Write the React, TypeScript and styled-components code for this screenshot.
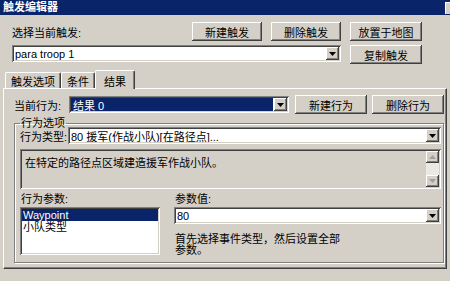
import React from 'react'
import styled, { createGlobalStyle } from 'styled-components'

const GlobalStyle = createGlobalStyle`
  html, body {
    margin: 0;
    padding: 0;
    background: #d4d0c8;
  }
  body {
    font-family: "Liberation Sans", "Noto Sans CJK SC", sans-serif;
    font-size: 11px;
    color: #000;
  }
`

const raised = `
  box-shadow: inset -1px -1px #404040, inset 1px 1px #ffffff,
    inset -2px -2px #808080, inset 2px 2px #d4d0c8;
`
const sunken = `
  box-shadow: inset 1px 1px #808080, inset -1px -1px #ffffff,
    inset 2px 2px #404040, inset -2px -2px #d4d0c8;
`

const Arrow = ({ up, grey }: { up?: boolean; grey?: boolean }) => (
  <svg width="7" height="4" viewBox="0 0 7 4">
    <path
      d={up ? 'M3.5 0 L7 4 L0 4 Z' : 'M0 0 L7 0 L3.5 4 Z'}
      fill={grey ? '#a0a0a0' : '#000'}
    />
  </svg>
)

const TriggerEditor = () => {
  return (
    <Window>
      <TitleBar>
        <span>触发编辑器</span>
        <TitleBtn />
      </TitleBar>
      <Body>
        <TopGrid>
          <Label>选择当前触发:</Label>
          <Button>新建触发</Button>
          <Button>删除触发</Button>
          <Button>放置于地图</Button>
          <Combo span>
            <ComboText>para troop 1</ComboText>
            <DropBtn><Arrow /></DropBtn>
          </Combo>
          <Button>复制触发</Button>
        </TopGrid>

        <Tabs>
          <TabStrip>
            <Tab>触发选项</Tab>
            <Tab>条件</Tab>
            <Tab active>结果</Tab>
          </TabStrip>
          <Panel>
            <ActionRow>
              <RowLabel w={55}>当前行为:</RowLabel>
              <Combo w={220}>
                <ComboText selected><Focus>结果 0</Focus></ComboText>
                <DropBtn><Arrow /></DropBtn>
              </Combo>
              <Button w={72} style={{ marginLeft: 6 }}>新建行为</Button>
              <Button w={72} style={{ marginLeft: 5 }}>删除行为</Button>
            </ActionRow>

            <Group>
              <Legend>行为选项</Legend>
              <TypeRow>
                <RowLabel w={48}>行为类型:</RowLabel>
                <Combo grow>
                  <ComboText>80 援军(作战小队)[在路径点]...</ComboText>
                  <DropBtn><Arrow /></DropBtn>
                </Combo>
              </TypeRow>
              <DescBox>
                <DescText>在特定的路径点区域建造援军作战小队。</DescText>
                <ScrollBar>
                  <ScrollBtn><Arrow up grey /></ScrollBtn>
                  <ScrollTrack />
                  <ScrollBtn><Arrow grey /></ScrollBtn>
                </ScrollBar>
              </DescBox>
              <Params>
                <ParamList>
                  <SmallLabel>行为参数:</SmallLabel>
                  <ListBox>
                    <ListItem selected>Waypoint</ListItem>
                    <ListItem>小队类型</ListItem>
                  </ListBox>
                </ParamList>
                <ParamValue>
                  <SmallLabel>参数值:</SmallLabel>
                  <Combo>
                    <ComboText>80</ComboText>
                    <DropBtn><Arrow /></DropBtn>
                  </Combo>
                  <Hint>首先选择事件类型，然后设置全部<br />参数。</Hint>
                </ParamValue>
              </Params>
            </Group>
          </Panel>
        </Tabs>
      </Body>
    </Window>
  )
}

export default function App() {
  return (
    <>
      <GlobalStyle />
      <TriggerEditor />
    </>
  )
}

const Window = styled.div`
  width: 450px;
  height: 281px;
  overflow: hidden;
  background: #d4d0c8;
  display: flex;
  flex-direction: column;
`
const TitleBar = styled.div`
  height: 15px;
  flex-shrink: 0;
  background: #0a246a;
  color: #fff;
  font-weight: bold;
  font-size: 11px;
  line-height: 15px;
  padding-left: 3px;
  display: flex;
  justify-content: space-between;
  align-items: center;
`
const TitleBtn = styled.div`
  width: 4px;
  height: 11px;
  background: #d4d0c8;
  border-left: 1px solid #fff;
  border-top: 1px solid #fff;
`
const Body = styled.div`
  padding-top: 7px;
  display: flex;
  flex-direction: column;
`
const TopGrid = styled.div`
  display: grid;
  grid-template-columns: 171px 70px 70px 72px;
  grid-template-rows: 19px 19px;
  column-gap: 9px;
  row-gap: 4px;
  padding-left: 12px;
`
const Label = styled.div`
  align-self: center;
  white-space: nowrap;
`
const Button = styled.div<{ w?: number }>`
  ${raised}
  width: ${p => (p.w ? `${p.w}px` : 'auto')};
  height: 19px;
  flex-shrink: 0;
  background: #d4d0c8;
  display: flex;
  align-items: center;
  justify-content: center;
  white-space: nowrap;
`
const Combo = styled.div<{ span?: boolean; w?: number; grow?: boolean }>`
  ${sunken}
  grid-column: ${p => (p.span ? '1 / 4' : 'auto')};
  width: ${p => (p.w ? `${p.w}px` : 'auto')};
  flex: ${p => (p.grow ? '1' : '0 0 auto')};
  height: 17px;
  box-sizing: border-box;
  background: #fff;
  display: flex;
  padding: 2px;
`
const ComboText = styled.div<{ selected?: boolean }>`
  flex: 1;
  display: flex;
  align-items: center;
  padding-left: 1px;
  margin-right: 1px;
  white-space: nowrap;
  overflow: hidden;
  background: ${p => (p.selected ? '#0a246a' : 'transparent')};
  color: ${p => (p.selected ? '#fff' : '#000')};
`
const Focus = styled.span`
  padding-left: 1px;
`
const DropBtn = styled.div`
  ${raised}
  width: 13px;
  flex-shrink: 0;
  background: #d4d0c8;
  display: flex;
  align-items: center;
  justify-content: center;
`
const Tabs = styled.div`
  margin: 6px 3px 0 3px;
  display: flex;
  flex-direction: column;
`
const TabStrip = styled.div`
  display: flex;
  align-items: flex-end;
  height: 18px;
  padding-left: 2px;
`
const Tab = styled.div<{ active?: boolean }>`
  position: relative;
  z-index: ${p => (p.active ? 2 : 1)};
  height: ${p => (p.active ? 19 : 16)}px;
  margin-bottom: ${p => (p.active ? -1 : 0)}px;
  padding: 0 ${p => (p.active ? 8 : 5)}px;
  box-sizing: border-box;
  background: #d4d0c8;
  border-left: 1px solid #fff;
  border-top: 1px solid #fff;
  border-right: 1px solid #404040;
  border-radius: 2px 2px 0 0;
  box-shadow: inset -1px 0 #808080;
  display: flex;
  align-items: ${p => (p.active ? 'flex-start' : 'center')};
  padding-top: ${p => (p.active ? 2 : 0)}px;
  white-space: nowrap;
`
const Panel = styled.div`
  height: 181px;
  box-sizing: border-box;
  border-left: 1px solid #fff;
  border-top: 1px solid #fff;
  border-right: 1px solid #404040;
  border-bottom: 1px solid #404040;
  box-shadow: inset -1px -1px #808080;
  padding: 6px 2px 0 10px;
  display: flex;
  flex-direction: column;
`
const ActionRow = styled.div`
  display: flex;
  align-items: center;
  height: 19px;
`
const RowLabel = styled.div<{ w: number }>`
  width: ${p => p.w}px;
  flex-shrink: 0;
  white-space: nowrap;
`
const Group = styled.fieldset`
  margin: 4px 0 0 0;
  padding: 0 2px 6px 5px;
  border: 1px solid #808080;
  box-shadow: inset 1px 1px #fff, 1px 1px #fff;
  display: flex;
  flex-direction: column;
  min-width: 0;
`
const Legend = styled.legend`
  padding: 0 1px;
  line-height: 11px;
`
const TypeRow = styled.div`
  display: flex;
  align-items: center;
  height: 17px;
  margin-top: -2px;
`
const DescBox = styled.div`
  ${sunken}
  margin-top: 5px;
  height: 40px;
  box-sizing: border-box;
  background: #d4d0c8;
  padding: 2px;
  display: flex;
`
const DescText = styled.div`
  flex: 1;
  padding: 3px 3px;
`
const ScrollBar = styled.div`
  width: 13px;
  display: flex;
  flex-direction: column;
`
const ScrollBtn = styled.div`
  ${raised}
  height: 12px;
  background: #d4d0c8;
  display: flex;
  align-items: center;
  justify-content: center;
`
const ScrollTrack = styled.div`
  flex: 1;
  background: #ebe9e4;
`
const Params = styled.div`
  display: flex;
  gap: 14px;
  margin-top: 4px;
`
const ParamList = styled.div`
  width: 140px;
  display: flex;
  flex-direction: column;
`
const SmallLabel = styled.div`
  height: 13px;
  line-height: 13px;
  padding-left: 1px;
  margin-bottom: 1px;
  white-space: nowrap;
`
const ListBox = styled.div`
  ${sunken}
  height: 48px;
  box-sizing: border-box;
  background: #fff;
  padding: 2px;
  display: flex;
  flex-direction: column;
`
const ListItem = styled.div<{ selected?: boolean }>`
  height: 12px;
  line-height: 12px;
  padding-left: 1px;
  background: ${p => (p.selected ? '#0a246a' : 'transparent')};
  color: ${p => (p.selected ? '#fff' : '#000')};
`
const ParamValue = styled.div`
  flex: 1;
  display: flex;
  flex-direction: column;
`
const Hint = styled.div`
  margin-top: 10px;
  line-height: 11px;
  padding-left: 1px;
`
